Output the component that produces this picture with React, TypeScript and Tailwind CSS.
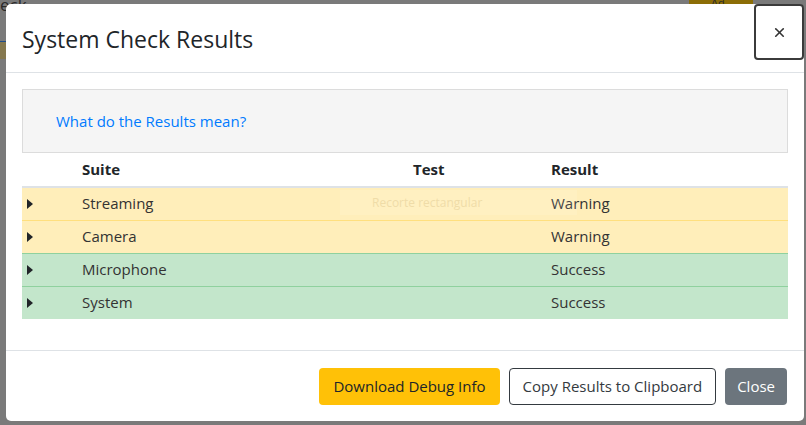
import { X } from 'lucide-react';

const rows = [
  { suite: 'Streaming', result: 'Warning', tone: 'warning' },
  { suite: 'Camera', result: 'Warning', tone: 'warning' },
  { suite: 'Microphone', result: 'Success', tone: 'success' },
  { suite: 'System', result: 'Success', tone: 'success' },
];

const Caret = () => (
  <svg width="6" height="10" viewBox="0 0 6 10" className="block">
    <path d="M0 0 L6 5 L0 10 Z" fill="#212529" />
  </svg>
);

export default function App() {
  return (
    <div className="relative h-[425px] w-[806px] overflow-hidden bg-[#7a7a7a] font-['Open_Sans',sans-serif] text-[#212529]">
      {/* page behind the backdrop */}
      <div className="absolute left-0 top-[-8px] text-[17px] text-[#2a2a2a]">eck</div>
      <div className="absolute left-[689px] top-0 h-[8px] w-[64px] bg-[#8c6d06] pl-[22px] text-[11px] leading-[6px] text-[#2a2a2a]">Ad</div>
      <div className="absolute left-0 top-[41px] h-px w-[6px] bg-[#1f4d8a]" />
      <div className="absolute left-0 top-[42px] h-[17px] w-[6px] bg-[#85784f]" />

      <div className="relative ml-[6px] mt-[4px] flex h-[417px] w-[798px] flex-col rounded-[5px] bg-white">
        {/* header */}
        <div className="flex h-[69px] items-start justify-between border-b border-[#dee2e6]">
          <h5 className="pl-4 pt-[20px] text-[23px] leading-[30px] text-[#212529]">System Check Results</h5>
          <button className="flex h-[56px] w-[50px] items-center justify-center rounded-[4px] border-2 border-[#3b3b3b] text-[#333]">
            <X size={15} strokeWidth={2.6} />
          </button>
        </div>

        {/* body */}
        <div className="flex-1 px-4 pt-4">
          <div className="flex h-[64px] items-center border border-[#dcdcdc] bg-[#f5f5f5] pl-[33px]">
            <a className="text-[15px] text-[#007bff]">What do the Results mean?</a>
          </div>

          <table className="w-full table-fixed border-collapse text-[15px]">
            <colgroup>
              <col className="w-[60px]" />
              <col className="w-[331px]" />
              <col className="w-[138px]" />
              <col />
            </colgroup>
            <thead>
              <tr className="h-[34px] border-b-2 border-[#dee2e6] text-left font-bold">
                <th />
                <th className="font-bold">Suite</th>
                <th className="font-bold">Test</th>
                <th className="font-bold">Result</th>
              </tr>
            </thead>
            <tbody>
              {rows.map((r, i) => (
                <tr
                  key={r.suite}
                  className={`h-[33px] ${
                    r.tone === 'warning' ? 'bg-[#ffeeba]' : 'bg-[#c3e6cb]'
                  } ${
                    i === 0
                      ? ''
                      : r.tone === 'warning'
                      ? 'border-t border-[#ffdf7e]'
                      : 'border-t border-[#8fd19e]'
                  }`}
                >
                  <td className="pl-[5px]">
                    <Caret />
                  </td>
                  <td className="pb-px text-[#333]">{r.suite}</td>
                  <td />
                  <td className="pb-px text-[#333]">{r.result}</td>
                </tr>
              ))}
            </tbody>
          </table>
        </div>

        {/* footer */}
        <div className="flex h-[71px] items-center justify-end gap-[9px] border-t border-[#dee2e6] pr-[17px]">
          <button className="h-[37px] rounded-[4px] bg-[#ffc107] px-[14px] text-[15px] text-[#212529]">
            Download Debug Info
          </button>
          <button className="h-[37px] rounded-[4px] border border-[#343a40] bg-white px-[13px] text-[15px] text-[#343a40]">
            Copy Results to Clipboard
          </button>
          <button className="h-[37px] rounded-[4px] bg-[#6c757d] px-[12px] text-[15px] text-white">
            Close
          </button>
        </div>

        {/* snipping tool hint floating over the table */}
        <div className="pointer-events-none absolute left-[334px] top-[186px] flex h-[25px] w-[237px] items-center bg-white/10 pl-[32px] text-[12px] text-[#efdca8]">
          Recorte rectangular
        </div>
      </div>
    </div>
  );
}
